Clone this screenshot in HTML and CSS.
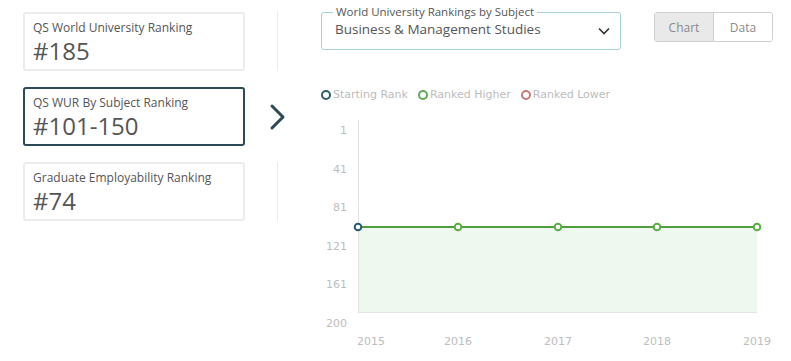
FILE: index.html
```html
<!DOCTYPE html>
<html lang="en">
<head>
    <meta charset="UTF-8">
    <meta name="viewport" content="width=device-width, initial-scale=1.0">
    <link rel="stylesheet" href="styles.css">
    <title>Rankings</title>
</head>
<body>
    <div class="page">
        <div class="rankings">
            <div class="rank-row">
                <div class="rank-card">
                    <div class="rank-title">QS World University Ranking</div>
                    <div class="rank-value">#185</div>
                </div>
                <div class="rank-side"><span class="divider"></span></div>
            </div>
            <div class="rank-row">
                <div class="rank-card active">
                    <div class="rank-title">QS WUR By Subject Ranking</div>
                    <div class="rank-value">#101-150</div>
                </div>
                <div class="rank-side">
                    <svg class="arrow" width="18" height="28" viewBox="0 0 18 28">
                        <path d="M3 3 L14 14 L3 25" fill="none" stroke="#2b4a55" stroke-width="3" stroke-linecap="round" stroke-linejoin="round"/>
                    </svg>
                </div>
            </div>
            <div class="rank-row">
                <div class="rank-card">
                    <div class="rank-title">Graduate Employability Ranking</div>
                    <div class="rank-value">#74</div>
                </div>
                <div class="rank-side"><span class="divider"></span></div>
            </div>
        </div>

        <div class="detail">
            <div class="toolbar">
                <fieldset class="subject-select">
                    <legend>World University Rankings by Subject</legend>
                    <span class="subject-value">Business &amp; Management Studies</span>
                    <svg class="caret" width="12" height="8" viewBox="0 0 12 8">
                        <path d="M1 1.5 L6 6.5 L11 1.5" fill="none" stroke="#333" stroke-width="1.6"/>
                    </svg>
                </fieldset>
                <div class="toggle">
                    <button class="toggle-btn on">Chart</button>
                    <button class="toggle-btn">Data</button>
                </div>
            </div>

            <div class="legend">
                <span class="legend-item"><i class="dot start"></i>Starting Rank</span>
                <span class="legend-item"><i class="dot higher"></i>Ranked Higher</span>
                <span class="legend-item"><i class="dot lower"></i>Ranked Lower</span>
            </div>

            <svg class="chart" width="470" height="240" viewBox="0 0 470 240">
                <g class="y-labels" text-anchor="end">
                    <text x="26" y="22">1</text>
                    <text x="26" y="61">41</text>
                    <text x="26" y="99">81</text>
                    <text x="26" y="138">121</text>
                    <text x="26" y="176">161</text>
                    <text x="26" y="215">200</text>
                </g>
                <rect x="37" y="115" width="399" height="85" fill="#eff8ee"/>
                <line x1="37.5" y1="8" x2="37.5" y2="200" stroke="#e3e3e3"/>
                <line x1="37" y1="200.5" x2="436" y2="200.5" stroke="#e3e3e3"/>
                <line x1="37" y1="115" x2="436" y2="115" stroke="#4f9e3e" stroke-width="2"/>
                <circle cx="37" cy="115" r="3.3" fill="#fff" stroke="#235e70" stroke-width="2"/>
                <circle cx="137" cy="115" r="3.3" fill="#fff" stroke="#5aad43" stroke-width="2"/>
                <circle cx="237" cy="115" r="3.3" fill="#fff" stroke="#5aad43" stroke-width="2"/>
                <circle cx="336" cy="115" r="3.3" fill="#fff" stroke="#5aad43" stroke-width="2"/>
                <circle cx="436" cy="115" r="3.3" fill="#fff" stroke="#5aad43" stroke-width="2"/>
                <g class="x-labels" text-anchor="middle">
                    <text x="36" y="233" text-anchor="start">2015</text>
                    <text x="137" y="233">2016</text>
                    <text x="237" y="233">2017</text>
                    <text x="336" y="233">2018</text>
                    <text x="436" y="233">2019</text>
                </g>
            </svg>
        </div>
    </div>
</body>
</html>
```

FILE: styles.css
```css
body {
    margin: 0;
    padding: 0;
    background-color: #fff;
    font-family: "Open Sans", Arial, sans-serif;
}

.page {
    display: flex;
    padding: 12px 0 0 23px;
}

.rankings {
    display: flex;
    flex-direction: column;
    gap: 16px;
    width: 267px;
}

.rank-row {
    display: flex;
    height: 59px;
}

.rank-card {
    box-sizing: border-box;
    width: 222px;
    height: 59px;
    border: 2px solid #ececec;
    border-radius: 3px;
    padding: 5px 0 0 8px;
}

.rank-card.active {
    border-color: #2b4a55;
}

.rank-title {
    font-size: 12px;
    color: #555;
    line-height: 18px;
}

.rank-value {
    font-size: 24px;
    color: #555;
    line-height: 28px;
}

.rank-side {
    flex: 1;
    display: flex;
    justify-content: center;
    align-items: center;
}

.divider {
    width: 1px;
    height: 59px;
    background-color: #ebebeb;
    margin-left: 19px;
}

.arrow {
    margin-left: 20px;
}

.detail {
    margin-left: 31px;
    display: flex;
    flex-direction: column;
}

.toolbar {
    display: flex;
    align-items: flex-start;
}

.subject-select {
    box-sizing: border-box;
    width: 300px;
    height: 44px;
    margin: -6px 0 0 0;
    padding: 0 10px 0 13px;
    border: 1px solid #a9d0d4;
    border-radius: 3px;
    display: flex;
    align-items: center;
    justify-content: space-between;
}

.subject-select legend {
    font-size: 11.5px;
    color: #555;
    padding: 0 3px;
    margin-left: -2px;
    line-height: 12px;
}

.subject-value {
    font-size: 13.5px;
    color: #555;
    margin-top: -9px;
}

.caret {
    margin-top: -5px;
}

.toggle {
    display: flex;
    margin-left: 33px;
    border: 1px solid #cfcfcf;
    border-radius: 3px;
    overflow: hidden;
}

.toggle-btn {
    font-family: "Open Sans", Arial, sans-serif;
    font-size: 12px;
    color: #8a8a8a;
    background-color: #fff;
    border: none;
    height: 28px;
    width: 58px;
    padding: 0;
}

.toggle-btn.on {
    background-color: #e9e9e9;
    border-right: 1px solid #cfcfcf;
    width: 59px;
}

.legend {
    display: flex;
    gap: 10px;
    margin-top: 38px;
    font-family: "DejaVu Sans", Verdana, sans-serif;
    font-size: 11px;
    color: #bcbcbc;
    line-height: 14px;
}

.legend-item {
    display: flex;
    align-items: center;
}

.dot {
    box-sizing: border-box;
    width: 10px;
    height: 10px;
    border: 2px solid;
    border-radius: 50%;
    margin-right: 2px;
}

.dot.start {
    border-color: #2b5d6b;
}

.dot.higher {
    border-color: #62a957;
}

.dot.lower {
    border-color: #c87a7a;
}

.chart {
    margin-top: 10px;
    font-family: "DejaVu Sans", Verdana, sans-serif;
    font-size: 11px;
    fill: #bdbdbd;
}
```
